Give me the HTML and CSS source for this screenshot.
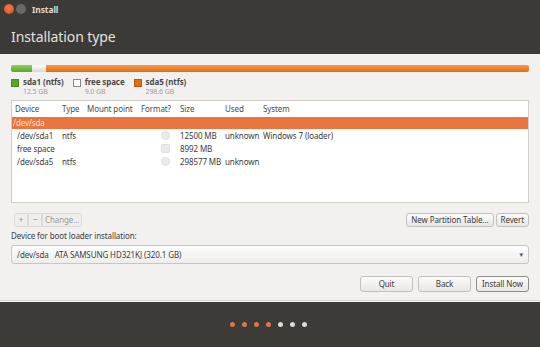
FILE: index.html
```html
<!DOCTYPE html>
<html lang="en">
<head>
    <meta charset="UTF-8">
    <title>Install</title>
    <link rel="stylesheet" href="styles.css">
</head>
<body>
    <div class="window">
        <div class="titlebar">
            <span class="btn-close"></span>
            <span class="btn-min"></span>
            <span class="title">Install</span>
        </div>

        <header>
            <h1>Installation type</h1>
        </header>

        <section id="contenido">
            <div class="disk-bar">
                <div class="seg seg-green"></div>
                <div class="seg seg-free"></div>
                <div class="seg seg-orange"></div>
            </div>

            <div class="legend">
                <div class="legend-item">
                    <span class="swatch swatch-green"></span>
                    <div>
                        <div class="legend-name">sda1 (ntfs)</div>
                        <div class="legend-size">12.5 GB</div>
                    </div>
                </div>
                <div class="legend-item">
                    <span class="swatch swatch-free"></span>
                    <div>
                        <div class="legend-name">free space</div>
                        <div class="legend-size">9.0 GB</div>
                    </div>
                </div>
                <div class="legend-item">
                    <span class="swatch swatch-orange"></span>
                    <div>
                        <div class="legend-name">sda5 (ntfs)</div>
                        <div class="legend-size">298.6 GB</div>
                    </div>
                </div>
            </div>

            <div class="table-container">
                <div class="table-row table-header">
                    <div class="c-dev">Device</div>
                    <div class="c-type">Type</div>
                    <div class="c-mount">Mount point</div>
                    <div class="c-fmt">Format?</div>
                    <div class="c-size">Size</div>
                    <div class="c-used">Used</div>
                    <div class="c-sys">System</div>
                </div>
                <div class="table-row selected">
                    <div class="c-dev">/dev/sda</div>
                </div>
                <div class="table-row">
                    <div class="c-dev indent">/dev/sda1</div>
                    <div class="c-type">ntfs</div>
                    <div class="c-mount"></div>
                    <div class="c-fmt"><span class="check"></span></div>
                    <div class="c-size">12500 MB</div>
                    <div class="c-used">unknown</div>
                    <div class="c-sys">Windows 7 (loader)</div>
                </div>
                <div class="table-row">
                    <div class="c-dev indent">free space</div>
                    <div class="c-type"></div>
                    <div class="c-mount"></div>
                    <div class="c-fmt"><span class="check square"></span></div>
                    <div class="c-size">8992 MB</div>
                    <div class="c-used"></div>
                    <div class="c-sys"></div>
                </div>
                <div class="table-row">
                    <div class="c-dev indent">/dev/sda5</div>
                    <div class="c-type">ntfs</div>
                    <div class="c-mount"></div>
                    <div class="c-fmt"><span class="check"></span></div>
                    <div class="c-size">298577 MB</div>
                    <div class="c-used">unknown</div>
                    <div class="c-sys"></div>
                </div>
            </div>

            <div class="toolbar">
                <div class="tool-group">
                    <span class="tool">+</span><span class="tool">&minus;</span><span class="tool tool-text">Change...</span>
                </div>
                <div class="tool-group">
                    <span class="button small">New Partition Table...</span>
                    <span class="button small">Revert</span>
                </div>
            </div>

            <div class="boot-label">Device for boot loader installation:</div>
            <div class="combo">
                <span>/dev/sda&nbsp;&nbsp;&nbsp;ATA SAMSUNG HD321KJ (320.1 GB)</span>
                <span class="arrow">&#9662;</span>
            </div>

            <div class="actions">
                <span class="button action">Quit</span>
                <span class="button action">Back</span>
                <span class="button action default">Install Now</span>
            </div>
        </section>

        <footer>
            <span class="dot on"></span>
            <span class="dot on"></span>
            <span class="dot on"></span>
            <span class="dot on"></span>
            <span class="dot"></span>
            <span class="dot"></span>
            <span class="dot"></span>
        </footer>
    </div>
</body>
</html>
```

FILE: styles.css
```css
body {
    font-family: "Noto Sans", "DejaVu Sans", sans-serif;
    background-color: #3c3b37;
    margin: 0;
    padding: 0;
    font-size: 8px;
    letter-spacing: -0.1px;
    color: #3c3c3c;
}

.window {
    width: 540px;
    height: 347px;
    display: flex;
    flex-direction: column;
}

.titlebar {
    height: 18px;
    display: flex;
    align-items: center;
    padding-left: 4px;
    background-color: #3b3a36;
}

.btn-close,
.btn-min {
    width: 10px;
    height: 10px;
    border-radius: 50%;
    margin-right: 2px;
}

.btn-close {
    background: radial-gradient(circle at 50% 40%, #f37b50, #d84a1c);
}

.btn-min {
    background: #6a6965;
}

.title {
    margin-left: 4px;
    color: #dfdbd2;
    font-weight: bold;
    font-size: 8.5px;
}

header {
    height: 36px;
    background-color: #3b3a36;
    padding-left: 11px;
    display: flex;
    align-items: center;
}

h1 {
    margin: 0;
    font-size: 14px;
    font-weight: normal;
    color: #e4e1da;
}

#contenido {
    background-color: #f2f1f0;
    height: 247px;
    padding: 11px 11px 0 11px;
    box-sizing: border-box;
    border-bottom: 1px solid #d8d6d2;
}

.disk-bar {
    display: flex;
    height: 7px;
    border-radius: 2px;
    overflow: hidden;
}

.seg-green {
    width: 21px;
    background: linear-gradient(#8fd05a, #5aa62a);
}

.seg-free {
    width: 14px;
    background: linear-gradient(#ffffff, #d8d8d8);
}

.seg-orange {
    flex: 1;
    background: linear-gradient(#f59a4c, #df6f14);
}

.legend {
    display: flex;
    gap: 9px;
    margin-top: 4px;
    height: 24px;
}

.legend-item {
    display: flex;
    gap: 4px;
}

.swatch {
    width: 6px;
    height: 6px;
    margin-top: 3px;
    border: 1px solid #888;
}

.swatch-green {
    background: #5aa62a;
    border-color: #4a8a22;
}

.swatch-free {
    background: #ffffff;
}

.swatch-orange {
    background: #df6f14;
    border-color: #b85a10;
}

.legend-name {
    font-weight: bold;
    font-size: 8px;
    color: #4a4a4a;
}

.legend-size {
    font-size: 7px;
    color: #a09d98;
}

.table-container {
    background-color: #ffffff;
    border: 1px solid #cfcdc8;
    height: 101px;
}

.table-row {
    display: flex;
    height: 13px;
    line-height: 13px;
    white-space: nowrap;
}

.table-header {
    height: 15px;
    line-height: 15px;
    margin-bottom: 1px;
    color: #4c4c4c;
}

.selected {
    height: 12px;
    line-height: 12px;
    background: #ea7440;
    color: #fbe0d4;
}

.c-dev {
    width: 47px;
    padding-left: 3px;
}

.selected .c-dev {
    padding-left: 1px;
}

.c-dev.indent {
    padding-left: 5px;
    width: 45px;
}

.c-type {
    width: 25px;
}

.c-mount {
    width: 54px;
}

.c-fmt {
    width: 39px;
    display: flex;
    justify-content: center;
    align-items: center;
}

.table-header .c-fmt {
    display: block;
}

.c-size {
    width: 45px;
}

.c-used {
    width: 38px;
}

.c-sys {
    flex: 1;
}

.check {
    width: 7px;
    height: 7px;
    border-radius: 50%;
    background: #ecebea;
    border: 1px solid #e0dfdd;
    margin-left: 10px;
}

.check.square {
    border-radius: 2px;
}

.toolbar {
    display: flex;
    justify-content: space-between;
    margin-top: 10px;
    height: 14px;
}

.tool-group {
    display: flex;
    gap: 2px;
}

.tool {
    height: 12px;
    line-height: 12px;
    min-width: 10px;
    padding: 0 1px;
    text-align: center;
    border: 1px solid #dcdad6;
    background: #efeeec;
    color: #9a9894;
    font-size: 9px;
    margin-left: -2px;
}

.tool:first-child {
    margin-left: 3px;
    border-radius: 2px 0 0 2px;
}

.tool-text {
    font-size: 8px;
    padding: 0 2px;
    border-radius: 0 2px 2px 0;
}

.button {
    display: inline-block;
    background: linear-gradient(#fbfbfa, #e8e7e5);
    border: 1px solid #c3c1bc;
    border-radius: 3px;
    color: #3c3c3c;
    text-align: center;
    box-sizing: border-box;
}

.button.small {
    height: 14px;
    line-height: 12px;
    padding: 0 4px;
    font-size: 8px;
}

.boot-label {
    margin-top: 1px;
    height: 15px;
    line-height: 15px;
}

.combo {
    margin-top: 2px;
    height: 17px;
    display: flex;
    justify-content: space-between;
    align-items: center;
    padding: 0 5px;
    background: linear-gradient(#fdfdfd, #eeedeb);
    border: 1px solid #c8c6c1;
    border-radius: 3px;
}

.arrow {
    font-size: 7px;
    color: #555;
}

.actions {
    display: flex;
    justify-content: flex-end;
    gap: 5px;
    margin-top: 12px;
}

.button.action {
    width: 53px;
    height: 16px;
    line-height: 14px;
    font-size: 8px;
}

.button.default {
    border-color: #8f8d88;
}

footer {
    flex: 1;
    background-color: #3c3b37;
    border-top: 1px solid #f6f5f4;
    display: flex;
    justify-content: center;
    align-items: center;
    gap: 7px;
    padding-right: 3px;
}

.dot {
    width: 5px;
    height: 5px;
    border-radius: 50%;
    background: #dcdad5;
}

.dot.on {
    background: #e0734a;
}
```
